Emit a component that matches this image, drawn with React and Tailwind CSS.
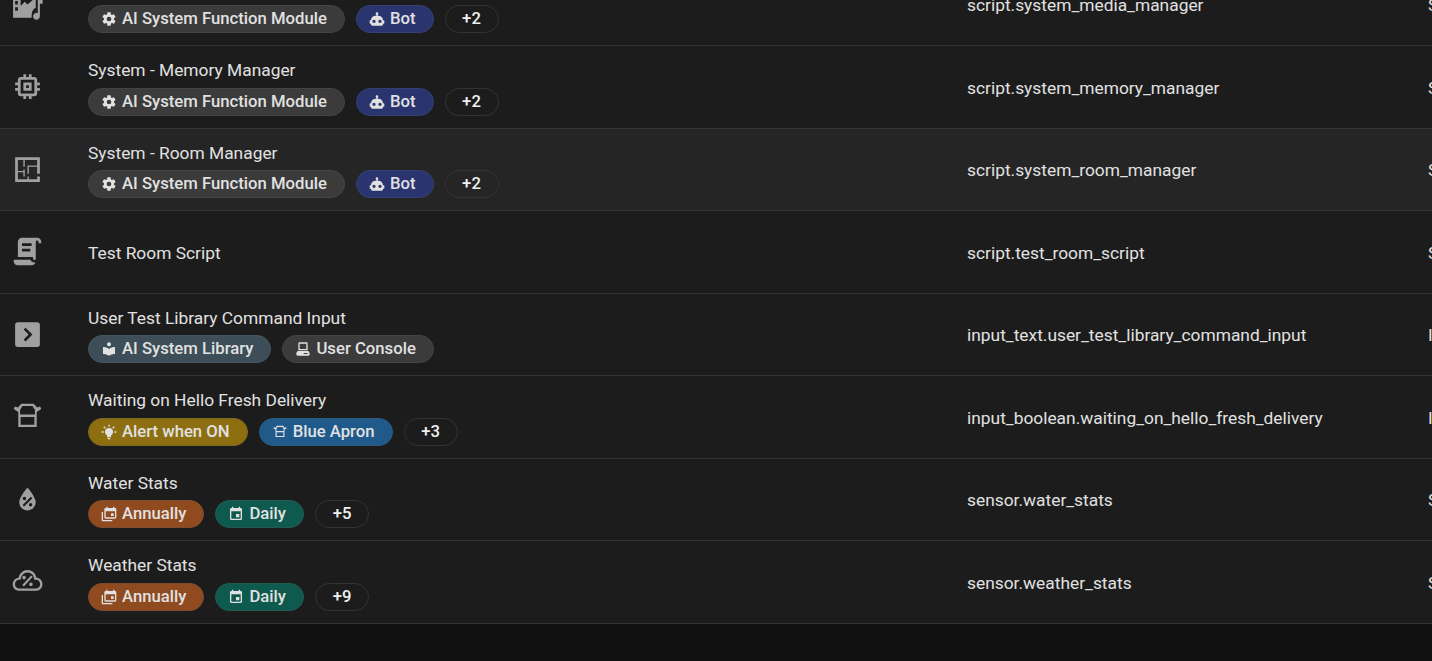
import React from 'react';

const paths = {
  memory: "M17,17H7V7H17M21,11V9H19V7C19,5.89 18.1,5 17,5H15V3H13V5H11V3H9V5H7C5.89,5 5,5.89 5,7V9H3V11H5V13H3V15H5V17A2,2 0 0,0 7,19H9V21H11V19H13V21H15V19H17A2,2 0 0,0 19,17V15H21V13H19V11M13,13H11V11H13M15,9H9V15H15V9Z",
  floor: "M10,5V10H9V5H5V13H9V12H10V17H9V14H5V19H12V17H13V19H19V17H21V21H3V3H21V15H19V10H13V15H12V9H19V5H10Z",
  script: "M17.8,20C17.4,21.2 16.3,22 15,22H5C3.3,22 2,20.7 2,19V18H5L14.2,18C14.6,19.2 15.7,20 17,20H17.8M19,2C20.7,2 22,3.3 22,5V6H20V5C20,4.4 19.6,4 19,4C18.4,4 18,4.4 18,5V18H17C16.4,18 16,17.6 16,17V16H5V5C5,3.3 6.3,2 8,2H19M8,6V8H15V6H8M8,10V12H14V10H8Z",
  console: "M5,3H19A2,2 0 0,1 21,5V19A2,2 0 0,1 19,21H5A2,2 0 0,1 3,19V5A2,2 0 0,1 5,3M10.6,7L9.2,8.4L12.8,12L9.2,15.6L10.6,17L15.6,12L10.6,7Z",
  water: "M12,3.25C12,3.25 6,10 6,14C6,17.32 8.69,20 12,20A6,6 0 0,0 18,14C18,10 12,3.25 12,3.25M14.47,9.97L15.53,11.03L9.53,17.03L8.47,15.97M9.75,10A1.25,1.25 0 0,1 11,11.25A1.25,1.25 0 0,1 9.75,12.5A1.25,1.25 0 0,1 8.5,11.25A1.25,1.25 0 0,1 9.75,10M14.25,14.5A1.25,1.25 0 0,1 15.5,15.75A1.25,1.25 0 0,1 14.25,17A1.25,1.25 0 0,1 13,15.75A1.25,1.25 0 0,1 14.25,14.5Z",
  cloud: "M12,3.7C15.2,3.7 17.9,6 18.4,9.1C20.9,9.3 22.9,11.4 22.9,14C22.9,16.7 20.7,18.8 18,18.8H6C3.4,18.8 1.2,16.7 1.2,14C1.2,11.5 3.1,9.5 5.5,9.2C6.3,6 8.9,3.7 12,3.7ZM12,5.4C9.2,5.4 7.2,7.8 7,10.8H6C4.3,10.8 2.9,12.2 2.9,14C2.9,15.8 4.3,17.1 6,17.1H18C19.8,17.1 21.2,15.8 21.2,14C21.2,12.2 19.9,10.7 18,10.7H16.8C16.8,7.6 14.8,5.4 12,5.4ZM14.6,7.6L15.8,8.6L9.4,15.6L8.2,14.6ZM9.5,7.9A1.3,1.3 0 1,1 9.49,7.9ZM14.5,12.7A1.3,1.3 0 1,1 14.49,12.7Z",
  media: "M1.5,2H18V14.5C16,15 15,17 15,21.6H1.5ZM3,9.5V12H5V9.5ZM3,14V16.5H5V14ZM7,8.6V13L10,10L12,12L16,8.6ZM19.5,8.6H23V11.5H21V20.5A2.5,2.5 0 1,1 19.5,18.3Z",
  cog: "M12,15.5A3.5,3.5 0 0,1 8.5,12A3.5,3.5 0 0,1 12,8.5A3.5,3.5 0 0,1 15.5,12A3.5,3.5 0 0,1 12,15.5M19.43,12.97C19.47,12.65 19.5,12.33 19.5,12C19.5,11.67 19.47,11.34 19.43,11L21.54,9.37C21.73,9.22 21.78,8.95 21.66,8.73L19.66,5.27C19.54,5.05 19.27,4.96 19.05,5.05L16.56,6.05C16.04,5.66 15.5,5.32 14.87,5.07L14.5,2.42C14.46,2.18 14.25,2 14,2H10C9.75,2 9.54,2.18 9.5,2.42L9.13,5.07C8.5,5.32 7.96,5.66 7.44,6.05L4.95,5.05C4.73,4.96 4.46,5.05 4.34,5.27L2.34,8.73C2.21,8.95 2.27,9.22 2.46,9.37L4.57,11C4.53,11.34 4.5,11.67 4.5,12C4.5,12.33 4.53,12.65 4.57,12.97L2.46,14.63C2.27,14.78 2.21,15.05 2.34,15.27L4.34,18.73C4.46,18.95 4.73,19.03 4.95,18.95L7.44,17.94C7.96,18.34 8.5,18.68 9.13,18.93L9.5,21.58C9.54,21.82 9.75,22 10,22H14C14.25,22 14.46,21.82 14.5,21.58L14.87,18.93C15.5,18.67 16.04,18.34 16.56,17.94L19.05,18.95C19.27,19.03 19.54,18.95 19.66,18.73L21.66,15.27C21.78,15.05 21.73,14.78 21.54,14.63L19.43,12.97Z",
  robot: "M12,2A2,2 0 0,1 14,4C14,4.74 13.6,5.39 13,5.73V7H14A7,7 0 0,1 21,14H22A1,1 0 0,1 23,15V18A1,1 0 0,1 22,19H21V20A2,2 0 0,1 19,22H5A2,2 0 0,1 3,20V19H2A1,1 0 0,1 1,18V15A1,1 0 0,1 2,14H3A7,7 0 0,1 10,7H11V5.73C10.4,5.39 10,4.74 10,4A2,2 0 0,1 12,2M7.5,13A2.5,2.5 0 0,0 5,15.5A2.5,2.5 0 0,0 7.5,18A2.5,2.5 0 0,0 10,15.5A2.5,2.5 0 0,0 7.5,13M16.5,13A2.5,2.5 0 0,0 14,15.5A2.5,2.5 0 0,0 16.5,18A2.5,2.5 0 0,0 19,15.5A2.5,2.5 0 0,0 16.5,13Z",
  reader: "M12,2A3,3 0 1,1 11.99,2ZM3,9C6,9 9.5,10 12,12C14.5,10 18,9 21,9V19.5C18,19.5 14.5,20.5 12,22C9.5,20.5 6,19.5 3,19.5Z",
  desktop: "M7,2H17A2,2 0 0,1 19,4V14H5V4A2,2 0 0,1 7,2M7,4V12H17V4H7M4,15H20L22,18V20A2,2 0 0,1 20,22H4A2,2 0 0,1 2,20V18ZM13,18V19.5H19V18Z",
  bulb: "M12,6A6,6 0 0,1 18,12C18,14.22 16.79,16.16 15,17.2V19A1,1 0 0,1 14,20H10A1,1 0 0,1 9,19V17.2C7.21,16.16 6,14.22 6,12A6,6 0 0,1 12,6M14,21V22A1,1 0 0,1 13,23H11A1,1 0 0,1 10,22V21H14M20,11H23V13H20V11M1,11H4V13H1V11M13,1V4H11V1H13M4.92,3.5L7.05,5.64L5.63,7.05L3.5,4.93L4.92,3.5M16.95,5.63L19.07,3.5L20.5,4.93L18.37,7.05L16.95,5.63Z",
  annual: "M21,17V8H7V17H21M21,3A2,2 0 0,1 23,5V17A2,2 0 0,1 21,19H7C5.89,19 5,18.1 5,17V5A2,2 0 0,1 7,3H8V1H10V3H18V1H20V3H21M3,21H17V23H3C1.89,23 1,22.1 1,21V9H3V21M19,15H15V11H19V15Z",
  daily: "M19,3H18V1H16V3H8V1H6V3H5C3.9,3 3,3.9 3,5V19A2,2 0 0,0 5,21H19A2,2 0 0,0 21,19V5A2,2 0 0,0 19,3M19,19H5V8H19V19M12,12H17V17H12V12Z",
  box: "M7.5,2.7H16.5L19,5.5L21.2,4.8L22,6.5L18.7,8.8V19.6H5.3V8.8L2,6.5L2.8,4.8L5,5.5ZM8.4,4.4L6.6,7V10.6H17.4V7L15.6,4.4ZM7,12.4V18H17V12.4Z",
};

function Icon({ name, className }) {
  return (
    <svg viewBox="0 0 24 24" className={className} fill="currentColor" fillRule="evenodd">
      <path d={paths[name]} />
    </svg>
  );
}

const tones = {
  grey: 'bg-[#3b3b3b] border-[#444444]',
  navy: 'bg-[#2a3570] border-[#34406f]',
  slate: 'bg-[#3d4e58] border-[#465660]',
  gold: 'bg-[#8d6f12] border-[#7f6820]',
  blue: 'bg-[#1f5a8a] border-[#2d5a80]',
  orange: 'bg-[#8f4a20] border-[#7f4d2c]',
  teal: 'bg-[#0f5a4e] border-[#245a50]',
};

function Chip({ icon, tone, children }) {
  return (
    <span className={`flex h-[28px] items-center gap-[5px] rounded-full border pl-[12px] pr-[17px] text-[16.7px] font-medium text-[#e1e1e1] ${tones[tone]}`}>
      <Icon name={icon} className="size-4 shrink-0" />
      {children}
    </span>
  );
}

function More({ n }) {
  return (
    <span className="flex h-[28px] w-[54px] items-center justify-center rounded-full border border-[#333333] text-[16.7px] font-medium text-[#f0f0f0]">
      +{n}
    </span>
  );
}

const moduleChips = [
  { icon: 'cog', tone: 'grey', label: 'AI System Function Module' },
  { icon: 'robot', tone: 'navy', label: 'Bot' },
];
const statChips = [
  { icon: 'annual', tone: 'orange', label: 'Annually' },
  { icon: 'daily', tone: 'teal', label: 'Daily' },
];

const rows = [
  { icon: 'media', name: 'System - Media Manager', entity: 'script.system_media_manager', type: 'Script', chips: moduleChips, more: 2 },
  { icon: 'memory', name: 'System - Memory Manager', entity: 'script.system_memory_manager', type: 'Script', chips: moduleChips, more: 2 },
  { icon: 'floor', name: 'System - Room Manager', entity: 'script.system_room_manager', type: 'Script', chips: moduleChips, more: 2, hover: true },
  { icon: 'script', name: 'Test Room Script', entity: 'script.test_room_script', type: 'Script' },
  {
    icon: 'console',
    name: 'User Test Library Command Input',
    entity: 'input_text.user_test_library_command_input',
    type: 'Input',
    chips: [
      { icon: 'reader', tone: 'slate', label: 'AI System Library' },
      { icon: 'desktop', tone: 'grey', label: 'User Console' },
    ],
  },
  {
    icon: 'box',
    name: 'Waiting on Hello Fresh Delivery',
    entity: 'input_boolean.waiting_on_hello_fresh_delivery',
    type: 'Input',
    chips: [
      { icon: 'bulb', tone: 'gold', label: 'Alert when ON' },
      { icon: 'box', tone: 'blue', label: 'Blue Apron' },
    ],
    more: 3,
  },
  { icon: 'water', name: 'Water Stats', entity: 'sensor.water_stats', type: 'Sensor', chips: statChips, more: 5 },
  { icon: 'cloud', name: 'Weather Stats', entity: 'sensor.weather_stats', type: 'Sensor', chips: statChips, more: 9 },
];

function Row({ row }) {
  return (
    <div className={`flex h-[82.5px] items-center border-b border-[#333333] text-[17.38px] text-[#e1e1e1] ${row.hover ? 'bg-[#252525]' : ''}`}>
      <div className="flex w-[88px] shrink-0 pl-[11px]">
        <Icon name={row.icon} className="size-[33px] text-[#a0a0a0]" />
      </div>
      <div className={`flex w-[879px] shrink-0 flex-col ${row.chips ? '' : 'pt-[2px]'}`}>
        <div className="leading-[24px]">{row.name}</div>
        {row.chips && (
          <div className="mt-[5.5px] flex gap-[11px]">
            {row.chips.map((c) => (
              <Chip key={c.label} icon={c.icon} tone={c.tone}>{c.label}</Chip>
            ))}
            {row.more && <More n={row.more} />}
          </div>
        )}
      </div>
      <div className="w-[461px] shrink-0 pt-[2px]">{row.entity}</div>
      <div className="shrink-0 pt-[2px]">{row.type}</div>
    </div>
  );
}

export default function App() {
  return (
    <div className="h-[661px] overflow-hidden bg-[#111111] font-['Roboto',sans-serif]">
      <div className="-mt-[36.5px] bg-[#1c1c1c]">
        {rows.map((row) => (
          <Row key={row.entity} row={row} />
        ))}
      </div>
    </div>
  );
}
